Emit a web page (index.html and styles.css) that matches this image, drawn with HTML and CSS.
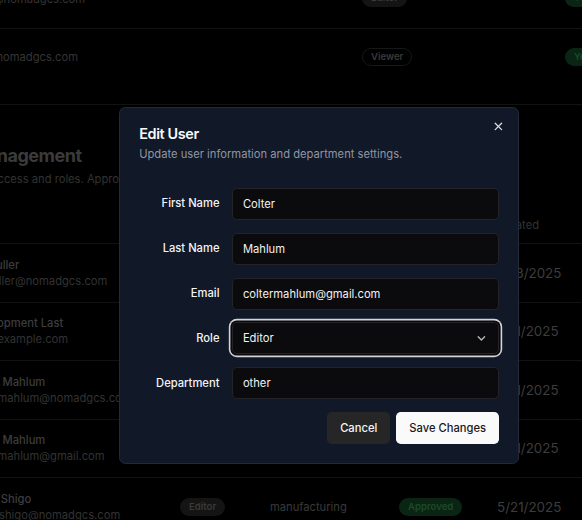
FILE: index.html
```html
<!DOCTYPE html>
<html lang="en">
<head>
<meta charset="utf-8">
<title>User Management</title>
<link rel="stylesheet" href="styles.css">
</head>
<body>
<div class="page">
  <div class="pending">
    <div class="prow prow-a">
      <div class="pcell-email">anna@nomadgcs.com</div>
      <div><span class="badge badge-muted">Editor</span></div>
      <div><span class="badge badge-green">Yes</span></div>
    </div>
    <div class="prow prow-b">
      <div class="pcell-email">kim@nomadgcs.com</div>
      <div><span class="badge badge-outline">Viewer</span></div>
      <div><span class="badge badge-green">Yes</span></div>
    </div>
  </div>

  <header class="intro">
    <h1>User Management</h1>
    <p>Manage user access and roles. Approve pending requests and edit departments.</p>
  </header>

  <div class="users">
    <div class="urow uhead">
      <div>Name</div><div>Role</div><div>Department</div><div>Status</div><div>Created</div>
    </div>
    <div class="urow">
      <div class="who"><div class="nm">Joe Fuller</div><div class="em">joe_fuller@nomadgcs.com</div></div>
      <div><span class="badge badge-muted">Viewer</span></div>
      <div class="dept">operations</div>
      <div><span class="badge badge-green">Approved</span></div>
      <div class="date">5/13/2025</div>
    </div>
    <div class="urow">
      <div class="who"><div class="nm">Development Last</div><div class="em">test@example.com</div></div>
      <div><span class="badge badge-muted">Viewer</span></div>
      <div class="dept">development</div>
      <div><span class="badge badge-green">Approved</span></div>
      <div class="date">5/11/2025</div>
    </div>
    <div class="urow">
      <div class="who"><div class="nm">Colter Mahlum</div><div class="em">coltermahlum@nomadgcs.com</div></div>
      <div><span class="badge badge-muted">Admin</span></div>
      <div class="dept">other</div>
      <div><span class="badge badge-green">Approved</span></div>
      <div class="date">5/11/2025</div>
    </div>
    <div class="urow">
      <div class="who"><div class="nm">Colter Mahlum</div><div class="em">coltermahlum@gmail.com</div></div>
      <div><span class="badge badge-muted">Editor</span></div>
      <div class="dept">other</div>
      <div><span class="badge badge-green">Approved</span></div>
      <div class="date">5/11/2025</div>
    </div>
    <div class="urow">
      <div class="who"><div class="nm">Caleb Shigo</div><div class="em">caleb.shigo@nomadgcs.com</div></div>
      <div><span class="badge badge-muted">Editor</span></div>
      <div class="dept">manufacturing</div>
      <div><span class="badge badge-green">Approved</span></div>
      <div class="date">5/21/2025</div>
    </div>
  </div>
</div>

<div class="dialog" role="dialog" aria-labelledby="dlg-title">
  <button class="close" type="button" aria-label="Close">
    <svg width="12.8" height="12.8" viewBox="0 0 24 24" fill="none" stroke="currentColor" stroke-width="2.4" stroke-linecap="round" stroke-linejoin="round"><path d="M18 6 6 18"/><path d="m6 6 12 12"/></svg>
  </button>
  <div class="dialog-head">
    <h2 id="dlg-title">Edit User</h2>
    <p>Update user information and department settings.</p>
  </div>
  <div class="form">
    <label for="f-first">First Name</label>
    <input id="f-first" class="field" value="Colter">
    <label for="f-last">Last Name</label>
    <input id="f-last" class="field" value="Mahlum">
    <label for="f-email">Email</label>
    <input id="f-email" class="field" value="coltermahlum@gmail.com">
    <label>Role</label>
    <div class="field select is-focused">
      <span>Editor</span>
      <svg class="chev" width="12.8" height="12.8" viewBox="0 0 24 24" fill="none" stroke="currentColor" stroke-width="2.4" stroke-linecap="round" stroke-linejoin="round"><path d="m6 9 6 6 6-6"/></svg>
    </div>
    <label for="f-dept">Department</label>
    <input id="f-dept" class="field" value="other">
  </div>
  <div class="actions">
    <button class="btn btn-secondary" type="button">Cancel</button>
    <button class="btn btn-primary" type="button">Save Changes</button>
  </div>
</div>
</body>
</html>
```

FILE: styles.css
```css
* { box-sizing: border-box; }

html, body {
  margin: 0;
  padding: 0;
  background: #000;
}

body {
  position: relative;
  width: 582px;
  height: 520px;
  overflow: hidden;
  font-family: Inter, "Noto Sans", sans-serif;
  font-size: 11.2px;
  color: #3c3c3c;
}

.page {
  width: 660px;
  margin-left: -33px;
  margin-top: -30px;
}

/* pending table */
.prow {
  display: grid;
  grid-template-columns: 395px 203px 1fr;
  align-items: start;
  border-bottom: 1px solid #121212;
}
.prow-a { height: 58.7px; padding-top: 20px; }
.prow-b { height: 76.6px; padding-top: 19.6px; }
.pcell-email { color: #353535; line-height: 16px; padding-top: 0.6px; }

.badge {
  display: inline-flex;
  align-items: center;
  height: 17.4px;
  padding: 0 8px;
  border: 1px solid transparent;
  border-radius: 999px;
  font-size: 9.6px;
  font-weight: 600;
  line-height: 12.8px;
}
.badge-muted { background: #141414; color: #3a3a3a; }
.badge-outline { border-color: #171717; color: #3a3a3a; }
.badge-green { background: #0a2513; color: #1d4a2a; }

/* intro */
.intro { padding-top: 38.4px; }
.intro h1 {
  margin: 0 0 0 -40px;
  font-size: 18px;
  line-height: 24px;
  font-weight: 700;
  letter-spacing: -0.45px;
  color: #3b3b3b;
}
.intro p {
  margin: 3.2px 0 0 -48px;
  font-size: 11.2px;
  line-height: 16px;
  color: #333;
}

/* users table */
.users { margin-top: 18.1px; }
.urow {
  display: grid;
  grid-template-columns: 213px 90px 129px 98px 1fr;
  align-items: center;
  border-bottom: 1px solid #121212;
  height: 58.4px;
  line-height: 16px;
}
.urow.uhead { height: 39.4px; color: #333; padding-top: 1px; }
.who .nm { font-weight: 500; color: #3d3d3d; }
.who .em { color: #333; }
.dept { color: #3a3a3a; }
.date { color: #3d3d3d; font-size: 13.4px; }

/* dialog */
.dialog {
  position: absolute;
  left: 119px;
  top: 107px;
  width: 400px;
  padding: 19.2px;
  background: #111827;
  border: 1px solid #232a38;
  border-radius: 6.4px;
  color: #f5f5f5;
}

.close {
  position: absolute;
  left: 372.4px;
  top: 11.8px;
  width: 12.8px;
  height: 12.8px;
  padding: 0;
  border: 0;
  background: none;
  color: #dcdde0;
  display: block;
}
.close svg { display: block; }

.dialog-head h2 {
  margin: 0;
  font-size: 14.4px;
  line-height: 1;
  font-weight: 600;
  letter-spacing: -0.36px;
  color: #f8fafc;
}
.dialog-head p {
  margin: 4.8px 0 0;
  font-size: 11.2px;
  line-height: 16px;
  color: #8f96a3;
}

.form {
  display: grid;
  grid-template-columns: repeat(4, 1fr);
  gap: 12.8px;
  align-items: center;
  margin-top: 25.6px;
}
.form label {
  text-align: right;
  font-size: 11.2px;
  line-height: 1;
  font-weight: 500;
  color: #f4f4f5;
}
.field {
  grid-column: span 3;
  height: 32px;
  width: 100%;
  margin: 0;
  padding: 0 9.6px;
  background: #0b0b0d;
  border: 1px solid #23242a;
  border-radius: 4.8px;
  font: inherit;
  font-size: 11.2px;
  color: #f2f2f2;
  outline: none;
}
.select {
  display: flex;
  align-items: center;
  justify-content: space-between;
}
.is-focused {
  box-shadow: 0 0 0 1.6px #0a0a0a, 0 0 0 3.2px #d4d4d8;
}
.chev { color: #bdbdbd; display: block; }

.actions {
  display: flex;
  justify-content: flex-end;
  gap: 6.4px;
  margin-top: 12.8px;
}
.btn {
  height: 32px;
  padding: 0 12.8px;
  border: 0;
  border-radius: 4.8px;
  font-family: inherit;
  font-size: 11.2px;
  font-weight: 500;
  cursor: pointer;
}
.btn-secondary { background: #262626; color: #f5f5f5; }
.btn-primary { background: #fafafa; color: #18181b; }
```
